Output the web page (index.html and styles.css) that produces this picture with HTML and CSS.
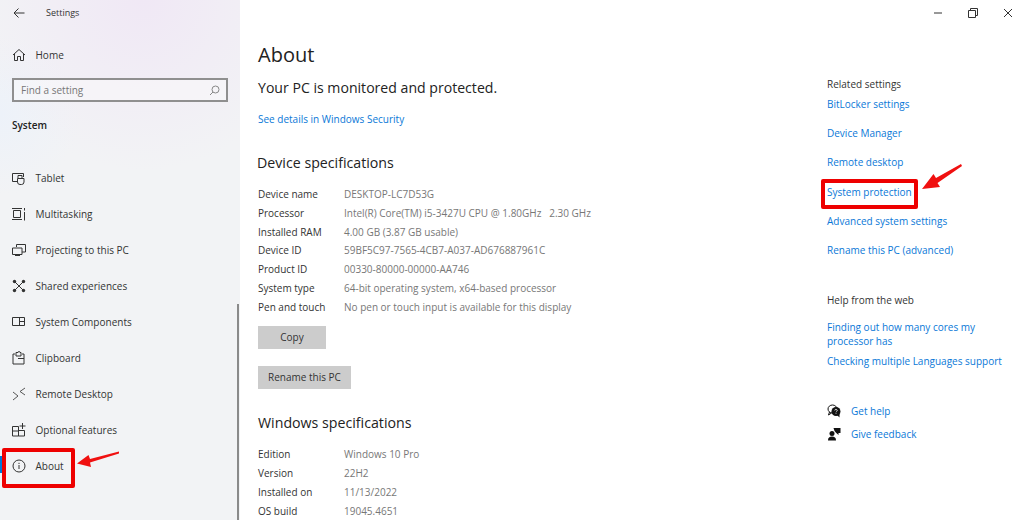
FILE: index.html
```html
<!DOCTYPE html>
<html lang="en">
<head>
<meta charset="utf-8">
<title>Settings - About</title>
<link rel="stylesheet" href="styles.css">
</head>
<body>
<div class="app">
  <aside class="sidebar">
    <div class="titlebar">
      <svg class="back" width="12" height="12" viewBox="0 0 12 12"><path d="M11.500 6H1M5.500 1.500 1 6l4.500 4.500" fill="none" stroke="#333" stroke-width="1"/></svg>
      <span class="app-title">Settings</span>
    </div>
    <div class="nav-row home">
      <svg class="nav-icon" viewBox="0 0 14 14"><path d="M1 7 7 1.500 13 7M2.500 6v6.500h3V8.500h3v4h3V6" fill="none" stroke="#333"/></svg>
      <span>Home</span>
    </div>
    <div class="search">
      <span>Find a setting</span>
      <svg width="11" height="11" viewBox="0 0 11 11"><circle cx="6.500" cy="4.500" r="3.500" fill="none" stroke="#888"/><path d="M4 7 1 10" stroke="#888"/></svg>
    </div>
    <div class="group">System</div>
    <nav class="nav">
      <div class="nav-row">
        <svg class="nav-icon" viewBox="0 0 14 14"><path d="M5 10.500H.5v-8h11V6" fill="none" stroke="#333"/><path d="M6 7V4.500h4V7M5.500 7.500h6.500V11a2.500 2.500 0 0 1-2.500 2.500H8A2.500 2.500 0 0 1 5.500 11Z" fill="none" stroke="#333"/></svg>
        <span>Tablet</span>
      </div>
      <div class="nav-row">
        <svg class="nav-icon" viewBox="0 0 14 14"><path d="M0 1.500h10M0 12.500h10M1.500 3.500h7v7h-7zM12.500 1v2.500M12.500 5v8.500" fill="none" stroke="#333"/></svg>
        <span>Multitasking</span>
      </div>
      <div class="nav-row">
        <svg class="nav-icon" viewBox="0 0 14 14"><path d="M4.500 4V1.500h9V9H10M.5 5h9.500v6.500H.5zM3 12.500h5" fill="none" stroke="#333"/></svg>
        <span>Projecting to this PC</span>
      </div>
      <div class="nav-row">
        <svg class="nav-icon" viewBox="0 0 14 14"><path d="m3 3 8 8M11 3l-8 8" stroke="#333"/><circle cx="2.500" cy="2.500" r="1.700" fill="#333"/><circle cx="11.500" cy="2.500" r="1.700" fill="#333"/><circle cx="2.500" cy="11.500" r="1.700" fill="#333"/><circle cx="11.500" cy="11.500" r="1.700" fill="#333"/></svg>
        <span>Shared experiences</span>
      </div>
      <div class="nav-row">
        <svg class="nav-icon" viewBox="0 0 14 14"><path d="M.5 2.500h12v8H.5zM7.500 2.500v8M7.500 6.500h5" fill="none" stroke="#333"/></svg>
        <span>System Components</span>
      </div>
      <div class="nav-row">
        <svg class="nav-icon" viewBox="0 0 14 14"><path d="M3 3H1v10h11V3h-2M4 5V1.500h2a1 1 0 0 1 2 0h1V5zM6 7.500h6" fill="none" stroke="#333"/></svg>
        <span>Clipboard</span>
      </div>
      <div class="nav-row">
        <svg class="nav-icon" viewBox="0 0 14 14"><path d="m1 5 5 4-5 4M13 1 8 4.500l5 3.500" fill="none" stroke="#444" stroke-width=".9"/></svg>
        <span>Remote Desktop</span>
      </div>
      <div class="nav-row">
        <svg class="nav-icon" viewBox="0 0 14 14"><path d="M.5 3.500h6v9.500H.5zM6.500 7.500h6V13h-6M.5 8h6M10.500 0v6M7.500 3h6" fill="none" stroke="#333"/></svg>
        <span>Optional features</span>
      </div>
      <div class="nav-row active">
        <svg class="nav-icon" viewBox="0 0 14 14"><circle cx="7" cy="7" r="6" fill="none" stroke="#333"/><path d="M7 6v4M7 3.800v1.200" stroke="#333"/></svg>
        <span>About</span>
      </div>
    </nav>
    <div class="scrollbar"></div>
  </aside>

  <main class="content">
    <h1>About</h1>
    <p class="status">Your PC is monitored and protected.</p>
    <a class="link security">See details in Windows Security</a>
    <h2 class="device">Device specifications</h2>
    <dl class="specs">
      <dt>Device name</dt><dd>DESKTOP-LC7D53G</dd>
      <dt>Processor</dt><dd>Intel(R) Core(TM) i5-3427U CPU @ 1.80GHz &nbsp; 2.30 GHz</dd>
      <dt>Installed RAM</dt><dd>4.00 GB (3.87 GB usable)</dd>
      <dt>Device ID</dt><dd>59BF5C97-7565-4CB7-A037-AD676887961C</dd>
      <dt>Product ID</dt><dd>00330-80000-00000-AA746</dd>
      <dt>System type</dt><dd>64-bit operating system, x64-based processor</dd>
      <dt>Pen and touch</dt><dd>No pen or touch input is available for this display</dd>
    </dl>
    <div class="btn copy">Copy</div>
    <div class="btn rename">Rename this PC</div>
    <h2 class="windows">Windows specifications</h2>
    <dl class="specs">
      <dt>Edition</dt><dd>Windows 10 Pro</dd>
      <dt>Version</dt><dd>22H2</dd>
      <dt>Installed on</dt><dd>11/13/2022</dd>
      <dt>OS build</dt><dd>19045.4651</dd>
    </dl>
  </main>

  <aside class="related">
    <div class="controls">
      <svg width="10" height="10" viewBox="0 0 10 10"><path d="M1 5h8" stroke="#333"/></svg>
      <svg width="10" height="10" viewBox="0 0 10 10"><path d="M.5 2.500h7v7h-7zM2.500 2.500v-2h7v7h-2" fill="none" stroke="#333"/></svg>
      <svg width="10" height="10" viewBox="0 0 10 10"><path d="m1 1 8 8M9 1 1 9" stroke="#333"/></svg>
    </div>
    <div class="rel-head">Related settings</div>
    <ul class="links">
      <li><a class="link">BitLocker settings</a></li>
      <li><a class="link">Device Manager</a></li>
      <li><a class="link">Remote desktop</a></li>
      <li><a class="link">System protection</a></li>
      <li><a class="link">Advanced system settings</a></li>
      <li><a class="link">Rename this PC (advanced)</a></li>
    </ul>
    <div class="rel-head help">Help from the web</div>
    <a class="link web first">Finding out how many cores my<br>processor has</a>
    <a class="link web">Checking multiple Languages support</a>
    <div class="support">
      <div class="sup-row">
        <svg width="14" height="14" viewBox="0 0 14 14"><ellipse cx="5.500" cy="5" rx="4.500" ry="4" fill="none" stroke="#111"/><path d="m2.500 8-1 3 3-2" fill="none" stroke="#111"/><circle cx="9" cy="7.500" r="4.500" fill="#111"/><path d="m10 11 2.500 2.500V10z" fill="#111"/><path d="M7.800 6.500a1.200 1.200 0 1 1 1.700 1.100L9 8.300M9 9.300v.7" stroke="#fff" stroke-width=".8" fill="none"/></svg>
        <a class="link">Get help</a>
      </div>
      <div class="sup-row">
        <svg width="14" height="14" viewBox="0 0 14 14"><circle cx="5" cy="6.500" r="2.500" fill="#111"/><path d="M1 13.500c0-3 1.500-4 4-4s4 1 4 4z" fill="#111"/><path d="M6.500 1h7v5h-2v2l-2.500-2.200L7.500 4z" fill="#111"/></svg>
        <a class="link">Give feedback</a>
      </div>
    </div>
  </aside>
</div>

<div class="mark mark-about"></div>
<svg class="arrow arrow-about" width="44" height="20" viewBox="0 0 44 20"><path d="M43 1.500 14 9l-1.500-4L1 13.500 15 17l-1-4.500L43 3.500Z" fill="#f01010"/></svg>
<div class="mark mark-protect"></div>
<svg class="arrow arrow-protect" width="42" height="28" viewBox="0 0 42 28"><path d="M40 1 15 15l-2.500-4L1 26l18-2-2.500-4L41 3Z" fill="#f01010"/></svg>
```

FILE: styles.css
```css
* { box-sizing: border-box; }
html, body { margin: 0; height: 520px; overflow: hidden; background: #fff; }
body { position: relative; font-family: "Open Sans", "Noto Sans", sans-serif; font-size: 10px; color: #333; }
.app { display: flex; height: 520px; }

.sidebar {
  position: relative;
  flex: 0 0 240px;
  background:
    radial-gradient(circle at 60% 0, #f0e8f5 0, rgba(240,232,245,0) 170px),
    radial-gradient(circle at 0 115px, #edf2f9 0, rgba(237,242,249,0) 80px),
    #f2f3f5;
}
.titlebar { display: flex; align-items: center; height: 25px; padding-left: 13px; }
.back { display: block; }
.app-title { margin-left: 21px; font-size: 9px; }
.nav-row { display: flex; align-items: center; height: 36px; padding-left: 12px; gap: 9.500px; white-space: nowrap; }
.nav-icon { flex: none; width: 14px; height: 14px; }
.home { height: 36px; margin-top: 12px; }
.search {
  display: flex; justify-content: space-between; align-items: center;
  margin: 5px 12px 0; height: 24px; padding: 0 6px 0 7px;
  border: 2px solid #8f8f8f; color: #777; background: rgba(255,255,255,.35);
}
.group { margin: 14px 0 0 12px; font-weight: 600; color: #222; line-height: 18px; }
.nav { margin-top: 26px; }
.active { position: relative; }
.active::before { content: ""; position: absolute; left: 0; top: 8px; width: 2px; height: 17px; background: #0078d7; }
.scrollbar { position: absolute; right: 1px; top: 304px; bottom: 0; width: 2px; background: #8a8a8a; }

.content { flex: 0 0 570px; padding: 0 0 0 18px; }
h1 { margin: 41px 0 0; font-size: 20px; font-weight: 400; line-height: 27px; color: #222; }
.status { margin: 10px 0 0; font-size: 14.100px; line-height: 20px; color: #222; }
.link { color: #0a78d7; display: block; }
.security { margin-top: 13px; line-height: 16px; }
h2 { margin: 0; font-size: 14.200px; font-weight: 400; line-height: 20px; color: #222; }
.device { margin: 26px 0 0 -1px; }
.windows { margin-top: 24px; }
.specs { display: grid; grid-template-columns: 86px 1fr; grid-auto-rows: 18.800px; margin: 12px 0 0; line-height: 18px; }
.specs dd { margin: 0; color: #777; white-space: nowrap; }
.specs dt { color: #333; }
.btn { height: 23px; background: #ccc; line-height: 23px; text-align: center; color: #333; }
.copy { width: 68px; margin-top: 9.600px; }
.rename { width: 93px; margin-top: 17px; }

.related { position: relative; flex: 1; padding: 0 0 0 17px; }
.controls { display: flex; gap: 25px; justify-content: flex-end; align-items: center; height: 25px; padding-right: 11px; }
.rel-head { margin-top: 51px; line-height: 16px; color: #333; }
.links { list-style: none; margin: 4px 0 0; padding: 0; display: grid; grid-auto-rows: 29.200px; line-height: 16px; }
.help { margin-top: 21px; }
.web { line-height: 14px; }
.first { margin-top: 12px; }
.first + .web { margin-top: 6px; }
.support { margin-top: 35px; display: grid; row-gap: 7px; }
.sup-row { display: flex; align-items: center; gap: 10px; height: 16px; }

.mark { position: absolute; border: 4px solid #ee0000; border-radius: 2px; }
.mark-about { left: 2px; top: 448px; width: 73px; height: 40px; }
.mark-protect { left: 821px; top: 179px; width: 97px; height: 30px; }
.arrow { position: absolute; display: block; }
.arrow-about { left: 76px; top: 450px; }
.arrow-protect { left: 921px; top: 163px; }
```
